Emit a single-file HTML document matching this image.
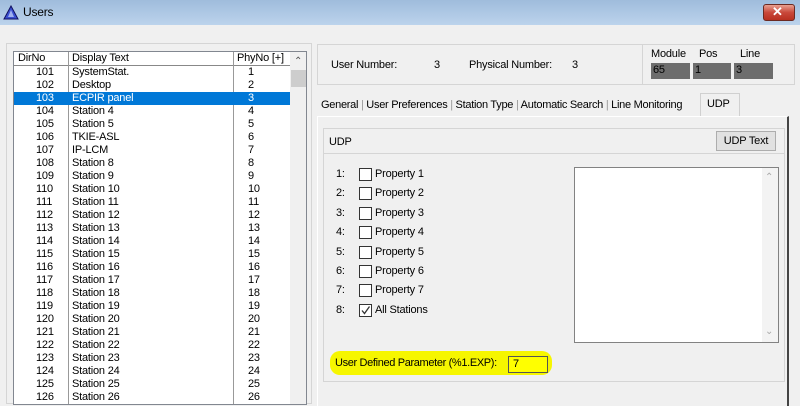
<!DOCTYPE html>
<html><head><style>
*{margin:0;padding:0;box-sizing:border-box}
body{width:800px;height:404px;overflow:hidden;background:#f0f0f0;font-family:"Liberation Sans",sans-serif;font-size:11px;color:#000;position:relative;letter-spacing:-0.2px}
.abs{position:absolute}
.title{left:0;top:0;width:800px;height:25px;background:linear-gradient(#9fbcdc,#bcd3ec)}
.row{position:absolute;left:0;width:276px;height:13px;line-height:13px}
.row span{position:absolute}
.cb{position:absolute;width:13px;height:13px;border:1px solid #333;background:#fff}
.lbl{position:absolute}
</style></head><body>
<div class="abs title"></div>
<svg class="abs" style="left:3px;top:5px" width="16" height="15"><polygon points="8,1 15,14 1,14" fill="#3a4fd0" stroke="#101060"/><polygon points="8,5 11,12 5,12" fill="#9fb0f0"/></svg>
<div class="abs" style="left:23px;top:5px;font-size:12px">Users</div>
<div class="abs" style="left:763px;top:4px;width:32px;height:17px;border:1px solid #6b2a22;border-radius:3px;background:linear-gradient(#e8a090,#c9483a 50%,#b83020)"></div>
<div class="abs" style="left:772px;top:4px;color:#fff;font-weight:bold;font-size:13px">✕</div>

<div class="abs" style="left:6px;top:43px;width:306px;height:361px;border:1px solid #d5d5d5"></div>
<div class="abs" style="left:13px;top:51px;width:294px;height:354px;border:1px solid #828790;background:#fff;overflow:hidden">
 <div class="abs" style="left:0;top:0;width:276px;height:14px;border-bottom:1px solid #888;line-height:13px">
  <span class="abs" style="left:4px">DirNo</span><span class="abs" style="left:58px">Display Text</span><span class="abs" style="left:223px">PhyNo [+]</span>
 </div>
 <div class="abs" style="left:54px;top:0;width:1px;height:360px;background:#999"></div>
 <div class="abs" style="left:219px;top:0;width:1px;height:360px;background:#999"></div>
 <div class="abs" style="left:276px;top:0;width:17px;height:354px;background:#f0f0f0"></div>
 <div class="abs" style="left:280px;top:4px;font-size:10px;color:#555">&#8963;</div>
 <div class="abs" style="left:277px;top:18px;width:15px;height:17px;background:#cdcdcd"></div>
 <div id="rows"></div>
</div>

<div class="abs" style="left:317px;top:44px;width:478px;height:41px;border:1px solid #d5d5d5"></div>
<div class="abs" style="left:642px;top:44px;width:1px;height:41px;background:#d5d5d5"></div>
<div class="abs" style="left:331px;top:59px">User Number:</div>
<div class="abs" style="left:434px;top:59px">3</div>
<div class="abs" style="left:469px;top:59px">Physical Number:</div>
<div class="abs" style="left:572px;top:59px">3</div>
<div class="abs" style="left:651px;top:48px">Module</div>
<div class="abs" style="left:699px;top:48px">Pos</div>
<div class="abs" style="left:740px;top:48px">Line</div>
<div class="abs" style="left:651px;top:63px;width:39px;height:16px;background:#6d6d6d;padding-left:2px;line-height:15px">65</div>
<div class="abs" style="left:693px;top:63px;width:38px;height:16px;background:#6d6d6d;padding-left:2px;line-height:15px">1</div>
<div class="abs" style="left:734px;top:63px;width:39px;height:16px;background:#6d6d6d;padding-left:2px;line-height:15px">3</div>

<div class="abs" style="left:321px;top:98px;white-space:nowrap;line-height:14px;letter-spacing:-0.28px">General <span style="color:#999">|</span> User Preferences <span style="color:#999">|</span> Station Type <span style="color:#999">|</span> Automatic Search <span style="color:#999">|</span> Line Monitoring</div>
<div class="abs" style="left:700px;top:93px;width:40px;height:24px;border:1px solid #d0d0d0;border-bottom:none;background:#f0f0f0;padding:4px 0 0 6px">UDP</div>
<div class="abs" style="left:317px;top:116px;width:472px;height:290px;border-top:1px solid #fff;border-left:1px solid #fff;border-right:2px solid #444"></div>

<div class="abs" style="left:323px;top:128px;width:462px;height:254px;border:1px solid #d5d5d5"></div>
<div class="abs" style="left:323px;top:153px;width:462px;height:1px;background:#d5d5d5"></div>
<div class="abs" style="left:329px;top:136px">UDP</div>
<div class="abs" style="left:716px;top:131px;width:60px;height:20px;border:1px solid #adadad;background:#e1e1e1;text-align:center;line-height:18px">UDP Text</div>
<div id="props"></div>
<div class="abs" style="left:574px;top:167px;width:205px;height:176px;border:1px solid #828282;background:#fff"></div>
<div class="abs" style="left:762px;top:168px;width:16px;height:174px;background:#f3f3f3"></div>
<div class="abs" style="left:765px;top:172px;color:#aaa;font-size:10px">&#8963;</div>
<div class="abs" style="left:765px;top:326px;color:#aaa;font-size:10px">&#8964;</div>
<div class="abs" style="left:330px;top:351px;width:222px;height:24px;background:#f6f600;border-radius:10px"></div>
<div class="abs" style="left:335px;top:357px;letter-spacing:-0.35px">User Defined Parameter (%1.EXP):</div>
<div class="abs" style="left:508px;top:356px;width:40px;height:17px;border:1px solid #555;background:#ffff00;padding-left:4px;line-height:15px">7</div>

<script>
var r=document.getElementById('rows'),h='';
var names=['SystemStat.','Desktop','ECPIR panel','Station 4','Station 5','TKIE-ASL','IP-LCM'];
for(var i=0;i<27;i++){var n=101+i,t=i<7?names[i]:'Station '+(i+1),y=14+i*13,sel=i==2;
h+='<div class="row" style="top:'+y+'px;'+(sel?'background:#0078d7;color:#fff':'')+'"><span style="left:22px">'+n+'</span><span style="left:58px">'+t+'</span><span style="left:234px">'+(i+1)+'</span></div>';}
r.innerHTML=h;
var p=document.getElementById('props'),s='';
for(var j=0;j<8;j++){var y=168+j*19.4;
s+='<div class="lbl" style="left:336px;top:'+y+'px">'+(j+1)+':</div><div class="cb" style="left:359px;top:'+(y+0)+'px">'+(j==7?'<svg width="11" height="11" style="position:absolute;left:0;top:0"><path d="M2 5.5 L4.5 8.5 L9.5 1.5" stroke="#333" fill="none" stroke-width="1.3"/></svg>':'')+'</div><div class="lbl" style="left:375px;top:'+y+'px">'+(j==7?'All Stations':'Property '+(j+1))+'</div>';}
p.innerHTML=s;
</script>
</body></html>
